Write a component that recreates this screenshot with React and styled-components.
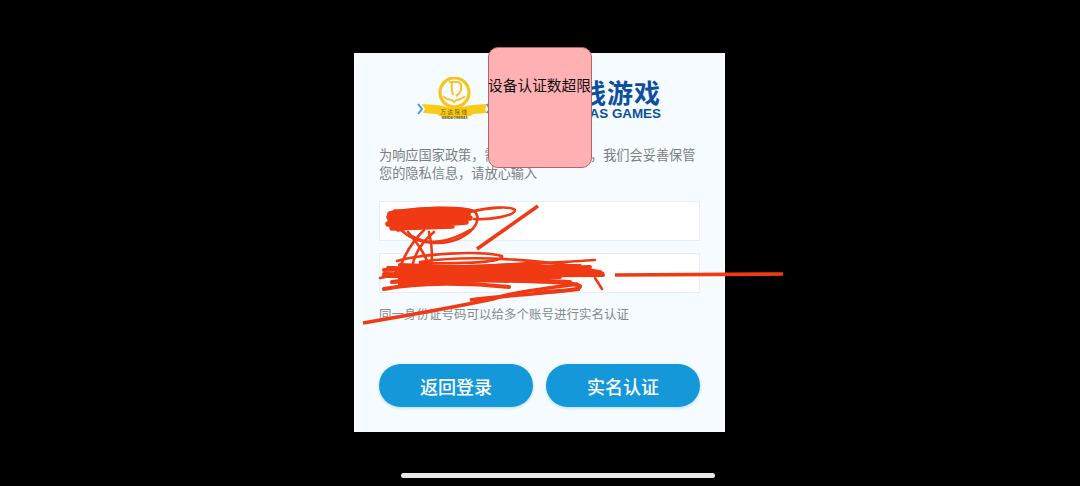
import React from "react";
import styled, { createGlobalStyle } from "styled-components";

const GlobalStyle = createGlobalStyle`
  html, body {
    margin: 0;
    padding: 0;
    background: #000;
  }
  body {
    font-family: "Noto Sans CJK SC", "Noto Sans", sans-serif;
  }
`;

const Screen = styled.div`
  position: relative;
  width: 1080px;
  height: 486px;
  overflow: hidden;
  display: flex;
  flex-direction: column;
  align-items: flex-start;
  padding: 53px 0 0 354px;
  box-sizing: border-box;
  background: #000;
`;

const Card = styled.div`
  width: 371px;
  height: 379px;
  box-sizing: border-box;
  padding: 24px 25px 0;
  background: #f5fbff;
  display: flex;
  flex-direction: column;
`;

const LogoRow = styled.div`
  display: flex;
  justify-content: space-between;
  align-items: flex-start;
  height: 44px;
  margin: 0 39px 0 38px;
`;

const LogoText = styled.div`
  display: flex;
  flex-direction: column;
  align-items: flex-end;
  color: #0d4f9e;
  font-weight: 700;
`;

const LogoTitle = styled.span`
  font-size: 26px;
  line-height: 30px;
  letter-spacing: 1px;
  white-space: nowrap;
`;

const LogoSub = styled.span`
  font-family: "Liberation Sans", sans-serif;
  font-size: 13.4px;
  line-height: 14px;
  white-space: nowrap;
`;

const Notice = styled.p`
  margin: 25px 0 20px;
  font-size: 13.2px;
  line-height: 17.5px;
  color: #7b7f82;
`;

const Field = styled.input`
  display: block;
  width: 100%;
  height: 40px;
  box-sizing: border-box;
  margin-bottom: 12px;
  background: #fff;
  border: 1px solid #e8edf1;
  outline: none;
`;

const Hint = styled.div`
  font-size: 12.5px;
  line-height: 18px;
  color: #85898c;
  white-space: nowrap;
`;

const Actions = styled.div`
  display: flex;
  justify-content: space-between;
  margin-top: 41px;
`;

const ActionButton = styled.button`
  width: 154px;
  height: 43px;
  border: none;
  border-radius: 22px;
  padding: 0;
  background: #1598da;
  box-shadow: 0 1px 3px rgba(21, 152, 218, 0.3);
  color: #fff;
  font-family: inherit;
  font-size: 18px;
  font-weight: 500;
`;

const HomeBar = styled.div`
  width: 314px;
  height: 5px;
  margin: 41px 0 0 47px;
  border-radius: 3px;
  background: #e9e9e9;
`;

const Toast = styled.div`
  position: absolute;
  left: 488px;
  top: 47px;
  width: 104px;
  height: 121px;
  box-sizing: border-box;
  padding-top: 26px;
  border: 1px solid #b0656b;
  border-radius: 10px;
  background: #ffb0b3;
  color: #111;
  font-size: 14.7px;
  line-height: 22px;
  text-align: center;
  white-space: nowrap;
`;

const ToastText = styled.span`
  display: block;
  margin: 0 -1px 0 -2px;
`;

const Scribble = styled.svg`
  position: absolute;
  left: 0;
  top: 0;
  pointer-events: none;
`;

function Emblem() {
  return (
    <svg width="74" height="44" viewBox="0 0 74 44">
      <circle cx="37.5" cy="15.5" r="14.5" fill="none" stroke="#f6c520" strokeWidth="3.2" />
      <path d="M32 5h8c4 0 5 4 4 8-1 3-3 5-5 6M35 5c-1 5 0 9 1 13M26 19c4 5 8 2 11 6 3-4 7-1 11-6" fill="none" stroke="#f6c520" strokeWidth="2" />
      <path d="M5 27l14 1c4 0 7 1 10 2h17c3-1 6-2 10-2l14-1-2 5 2 4-14 1c-3 5-33 5-36 0l-14-1 2-4z" fill="#f8cb16" />
      <path d="M1 27l4 5-4 5" fill="none" stroke="#3f9cd8" strokeWidth="2" />
      <path d="M70 27l3 5-3 4" fill="none" stroke="#3f9cd8" strokeWidth="2" />
      <text x="37.5" y="37" fontSize="5.5" fill="#6a5410" textAnchor="middle" letterSpacing="1.5">万达院线</text>
      <text x="37.5" y="42" fontSize="3" fill="#6a5410" textAnchor="middle" fontFamily="Liberation Sans" fontWeight="700">WANDA CINEMAS</text>
    </svg>
  );
}

const scribbleThick = [
  "M390 214C410 209 450 208 468 212",
  "M389 217L468 214L390 220L470 218L388 224L466 222L392 228L452 226",
  "M395 212L462 213L398 229",
];
const scribbleThin = [
  "M394 213C420 207 460 206 474 211C482 218 476 230 460 238C444 246 418 244 406 234C398 228 396 224 399 222",
  "M470 212C488 207 512 206 515 210C515 216 490 220 474 219",
  "M412 236C428 246 450 242 470 230",
  "M424 230C412 242 404 256 400 268",
  "M408 232C418 244 424 252 430 268",
  "M434 232C422 242 414 254 412 268",
  "M429 232C432 244 433 254 431 266",
  "M397 261C420 254 480 250 502 256C504 262 470 264 420 263",
  "M595 278L602 289",
  "M380 278C440 266 540 264 595 260",
  "M420 262C470 254 560 260 603 273",
];
const scribbleBand = [
  "M384 270L520 265L600 272L388 268L603 275L384 276L590 267L400 284L560 277L384 274L570 282L410 279L590 274",
  "M400 265L560 271L392 282L540 263L396 273L600 273",
  "M420 268L580 266L420 272L570 270L400 278L560 274",
  "M384 289C420 282 470 283 509 287",
  "M530 281C552 282 572 282 580 286C581 291 560 290 536 293",
];

function Scribbles() {
  return (
    <Scribble width="1080" height="486" viewBox="0 0 1080 486" fill="none" stroke="#f03a14" strokeLinecap="round" strokeLinejoin="round">
      <g strokeWidth="5.5">
        {scribbleThick.map((d) => <path key={d} d={d} />)}
      </g>
      <g strokeWidth="2.6">
        {scribbleThin.map((d) => <path key={d} d={d} />)}
      </g>
      <g strokeWidth="4">
        {scribbleBand.map((d) => <path key={d} d={d} />)}
      </g>
      <g strokeWidth="3.6" strokeLinecap="butt">
        <path d="M538 206L477 249" />
        <path d="M615 275L783 274" />
        <path d="M363 323C410 315 460 306 493 299C510 292 550 288 578 284" />
        <path d="M470 300C500 296 540 294 580 289" />
      </g>
    </Scribble>
  );
}

export default function App() {
  return (
    <Screen>
      <GlobalStyle />
      <Card>
        <LogoRow>
          <Emblem />
          <LogoText>
            <LogoTitle>万达院线游戏</LogoTitle>
            <LogoSub>WANDA CINEMAS GAMES</LogoSub>
          </LogoText>
        </LogoRow>
        <Notice>为响应国家政策，需您进行实名认证，我们会妥善保管您的隐私信息，请放心输入</Notice>
        <Field />
        <Field />
        <Hint>同一身份证号码可以给多个账号进行实名认证</Hint>
        <Actions>
          <ActionButton>返回登录</ActionButton>
          <ActionButton>实名认证</ActionButton>
        </Actions>
      </Card>
      <HomeBar />
      <Toast><ToastText>设备认证数超限</ToastText></Toast>
      <Scribbles />
    </Screen>
  );
}
